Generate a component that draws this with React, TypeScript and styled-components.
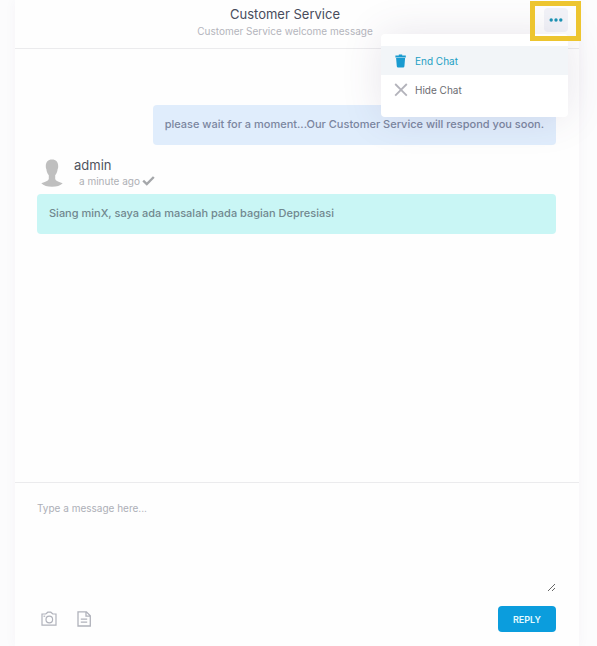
import React from "react";
import styled, { createGlobalStyle, css } from "styled-components";

const GlobalStyle = createGlobalStyle`
  *, *::before, *::after { box-sizing: border-box; }
  body {
    margin: 0;
    background: #fcfcfd;
    font-family: Inter, "Open Sans", sans-serif;
    font-size: 11px;
    color: #646c7a;
  }
  button, textarea { font: inherit; }
  h1, h2, p { margin: 0; font-weight: 400; }
`;

const Page = styled.div`
  display: flex;
  min-height: 100vh;
  padding: 0 18px 0 15px;
`;

const Card = styled.main`
  flex: 1;
  display: flex;
  flex-direction: column;
  min-width: 0;
  background: #fefefe;
  box-shadow: 0 0 12px rgba(82, 63, 105, 0.04);
`;

const Header = styled.header`
  display: flex;
  align-items: flex-start;
  padding: 4px 11px 10px;
  border-bottom: 1px solid #ebebed;
`;

const Heading = styled.div`
  flex: 1;
  text-align: center;
`;

const Title = styled.h1`
  font-size: 13px;
  line-height: 20px;
  color: #484c5c;
`;

const Subtitle = styled.p`
  font-size: 10px;
  line-height: 14px;
  color: #b4b5bc;
`;

const MenuAnchor = styled.div`
  position: relative;
  width: 24px;
  margin-top: 4px;
`;

const MenuButton = styled.button`
  display: flex;
  align-items: center;
  justify-content: center;
  width: 24px;
  height: 24px;
  padding: 0;
  border: 0;
  border-radius: 4px;
  background: #f2f3f8;
  color: #1b93b5;
`;

const Highlight = styled.span`
  position: absolute;
  top: -7px;
  left: -14px;
  width: 51px;
  height: 40px;
  border: 5px solid #edc52f;
  pointer-events: none;
`;

const Menu = styled.div`
  position: absolute;
  top: 26px;
  right: 0;
  width: 187px;
  padding: 12px 0 13px;
  border-radius: 4px;
  background: #fff;
  box-shadow: 0 0 40px rgba(82, 63, 105, 0.13);
`;

const MenuItem = styled.button<{ $active?: boolean }>`
  display: flex;
  align-items: center;
  gap: 7px;
  width: 100%;
  height: 29px;
  padding: 0 13px;
  border: 0;
  background: ${(p) => (p.$active ? "#f2f5f8" : "transparent")};
  color: ${(p) => (p.$active ? "#1c9fc4" : "#6b6c72")};
  font-size: 10px;
  text-align: left;
`;

const Messages = styled.section`
  flex: 1;
  padding: 56px 23px 20px 22px;
  display: flex;
  flex-direction: column;
`;

const Bubble = styled.p<{ $own?: boolean }>`
  padding: 9px 12px 11px;
  border-radius: 4px;
  line-height: 20px;
  font-weight: 500;
  ${(p) =>
    p.$own
      ? css`
          align-self: flex-end;
          background: #e0edfc;
          color: #7b86a0;
        `
      : css`
          background: #c9f6f5;
          color: #71888f;
        `}
`;

const Sender = styled.div`
  display: flex;
  align-items: center;
  gap: 10px;
  margin: 12px 0 5px;
  padding-left: 3px;
  height: 32px;
`;

const SenderName = styled.h2`
  font-size: 13px;
  line-height: 16px;
  color: #50545f;
`;

const Time = styled.p`
  display: flex;
  align-items: center;
  gap: 2px;
  padding-left: 5px;
  font-size: 10px;
  line-height: 16px;
  color: #aeb0b5;
`;

const Composer = styled.form`
  padding: 14px 23px 14px 22px;
  border-top: 1px solid #ebebed;
`;

const Input = styled.textarea`
  display: block;
  width: 100%;
  height: 95px;
  padding: 3px 0;
  border: 0;
  outline: 0;
  background: transparent;
  font-size: 10px;
  line-height: 16px;
  color: #646c7a;
  resize: vertical;
  &::placeholder { color: #adafb7; }
`;

const Actions = styled.div`
  display: flex;
  align-items: center;
  gap: 19px;
  margin-top: 14px;
  padding-left: 4px;
`;

const IconButton = styled.button`
  display: flex;
  padding: 0;
  border: 0;
  background: none;
  color: #b0b2bb;
`;

const Reply = styled.button`
  width: 58px;
  height: 26px;
  margin-left: auto;
  padding: 0;
  border: 0;
  border-radius: 4px;
  background: #0b9ddd;
  color: #e4fbff;
  font-size: 9px;
  font-weight: 600;
`;

const DotsIcon = () => (
  <svg width="14" height="4" viewBox="0 0 14 4" fill="currentColor" aria-hidden="true">
    <circle cx="2.200" cy="2" r="1.700" />
    <circle cx="7" cy="2" r="1.700" />
    <circle cx="11.800" cy="2" r="1.700" />
  </svg>
);

const TrashIcon = () => (
  <svg width="14" height="14" viewBox="0 0 14 14" fill="#199bd0" aria-hidden="true">
    <path d="M1.400 1.600h3.400V.6h3.400v1h3.600v1.800H1.400zM2.100 4h9l-.7 8.300q-.1 1.300-1.300 1.300h-5q-1.200 0-1.300-1.300z" />
  </svg>
);

const CloseIcon = () => (
  <svg width="14" height="14" viewBox="0 0 14 14" stroke="#b3b3bb" strokeWidth="1.800" aria-hidden="true">
    <path d="M1.200 1l11.600 11.600M12.800 1L1.200 12.600" />
  </svg>
);

const Avatar = () => (
  <svg width="24" height="28" viewBox="0 0 24 28" fill="#bfbfbf" role="img" aria-label="admin">
    <path d="M12 .5C8 .5 5.800 3 5.800 7.200c0 1.200.1 2.200.6 3.100.2 2.600 1.100 4.300 2.400 5.900v3.600c-.3 2.200-3.500 2.900-7.500 4.500C3.500 26.800 7.500 27.700 12 27.700s8.500-.9 10.700-3.400c-4-1.600-7.200-2.300-7.500-4.500v-3.600c1.300-1.600 2.200-3.300 2.400-5.900.5-.9.600-1.900.6-3.100C18.200 3 16 .5 12 .5z" />
  </svg>
);

const CheckIcon = () => (
  <svg width="13" height="10" viewBox="0 0 13 10" fill="none" stroke="#a5a7aa" strokeWidth="2.400" aria-hidden="true">
    <path d="M1.200 4.600l3.600 3.400 7-7" />
  </svg>
);

const CameraIcon = () => (
  <svg width="16" height="16" viewBox="0 0 16 16" fill="none" stroke="currentColor" strokeWidth="1.200" aria-hidden="true">
    <path d="M1 3h3.800l2-1.800h3L11.800 3H15v11.200H1z" />
    <circle cx="8.300" cy="8.500" r="3.300" />
    <path d="M2.500 5.200h1.700" />
  </svg>
);

const DocumentIcon = () => (
  <svg width="16" height="16" viewBox="0 0 16 16" fill="none" stroke="currentColor" strokeWidth="1.300" aria-hidden="true">
    <path d="M2 .8h8.400L14.300 4.700v10.300H2zM10 1v4.200h4M4.800 8.200h6.400M4.800 11.200h6.400" />
  </svg>
);

export default function App() {
  return (
    <>
      <GlobalStyle />
      <Page>
        <Card>
          <Header>
            <Heading>
              <Title>Customer Service</Title>
              <Subtitle>Customer Service welcome message</Subtitle>
            </Heading>
            <MenuAnchor>
              <MenuButton type="button" aria-label="Chat options" aria-haspopup="menu" aria-expanded="true">
                <DotsIcon />
              </MenuButton>
              <Menu role="menu">
                <MenuItem type="button" role="menuitem" $active>
                  <TrashIcon />
                  End Chat
                </MenuItem>
                <MenuItem type="button" role="menuitem">
                  <CloseIcon />
                  Hide Chat
                </MenuItem>
              </Menu>
              <Highlight />
            </MenuAnchor>
          </Header>
          <Messages>
            <Bubble $own>please wait for a moment...Our Customer Service will respond you soon.</Bubble>
            <Sender>
              <Avatar />
              <div>
                <SenderName>admin</SenderName>
                <Time>
                  a minute ago
                  <CheckIcon />
                </Time>
              </div>
            </Sender>
            <Bubble>Siang minX, saya ada masalah pada bagian Depresiasi</Bubble>
          </Messages>
          <Composer onSubmit={(e: React.FormEvent) => e.preventDefault()}>
            <Input aria-label="Message" placeholder="Type a message here..." />
            <Actions>
              <IconButton type="button" aria-label="Send a photo">
                <CameraIcon />
              </IconButton>
              <IconButton type="button" aria-label="Send a document">
                <DocumentIcon />
              </IconButton>
              <Reply type="submit">REPLY</Reply>
            </Actions>
          </Composer>
        </Card>
      </Page>
    </>
  );
}
